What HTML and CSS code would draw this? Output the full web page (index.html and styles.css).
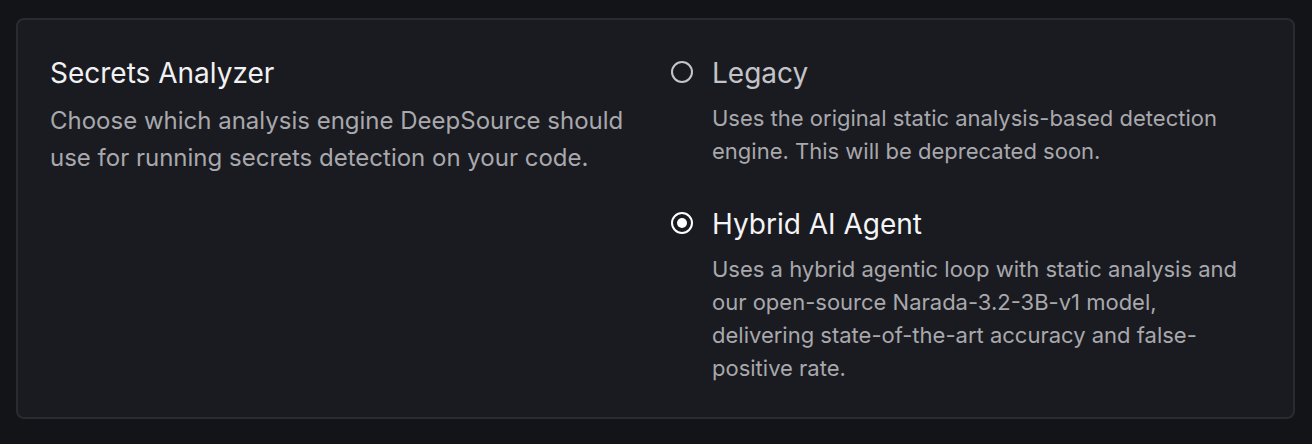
FILE: index.html
```html
<!DOCTYPE html>
<html>
<head>
<meta charset="utf-8">
<link rel="stylesheet" href="styles.css">
</head>
<body>
<section class="card">
  <div class="intro">
    <h2 class="title">Secrets Analyzer</h2>
    <p class="desc">Choose which analysis engine DeepSource should use for running secrets detection on your code.</p>
  </div>
  <div class="options">
    <label class="option">
      <span class="radio"></span>
      <span class="option-body">
        <span class="option-title muted">Legacy</span>
        <span class="option-desc">Uses the original static analysis-based detection engine. This will be deprecated soon.</span>
      </span>
    </label>
    <label class="option">
      <span class="radio checked"></span>
      <span class="option-body">
        <span class="option-title">Hybrid AI Agent</span>
        <span class="option-desc">Uses a hybrid agentic loop with static analysis and our open-source Narada-3.2-3B-v1 model, delivering state-of-the-art accuracy and false-positive rate.</span>
      </span>
    </label>
  </div>
</section>
</body>
</html>
```
FILE: styles.css
```css
* { box-sizing: border-box; }
html, body { margin: 0; padding: 0; }
body {
  background: #131418;
  font-family: Inter, "Noto Sans", sans-serif;
  padding: 18px 17px 0 16px;
}
.card {
  width: 1279px;
  height: 401px;
  background: #1a1b20;
  border: 2px solid #2a2b31;
  border-radius: 8px;
  display: grid;
  grid-template-columns: 621px 1fr;
  padding: 35px 32px 0 32px;
}
.title {
  margin: 0;
  font-size: 28px;
  font-weight: 400;
  line-height: 36px;
  color: #f1f1f3;
}
.desc {
  margin: 12px 0 0;
  font-size: 24px;
  line-height: 36.5px;
  color: #a8a8ad;
  max-width: 595px;
}
.options {
  display: flex;
  flex-direction: column;
  gap: 38px;
}
.option {
  display: flex;
  gap: 19px;
  align-items: flex-start;
}
.radio {
  flex: none;
  width: 22px;
  height: 22px;
  margin-top: 6px;
  border: 2px solid #c6c6ca;
  border-radius: 50%;
  display: flex;
  align-items: center;
  justify-content: center;
}
.radio.checked { border-color: #ffffff; }
.radio.checked::after {
  content: "";
  width: 10px;
  height: 10px;
  border-radius: 50%;
  background: #ffffff;
}
.option-body { display: flex; flex-direction: column; }
.option-title {
  font-size: 28px;
  line-height: 36px;
  color: #f4f4f6;
}
.option-title.muted { color: #c4c4c8; }
.option-desc {
  margin-top: 11px;
  font-size: 22px;
  line-height: 33px;
  color: #a8a8ad;
  max-width: 550px;
}
```
